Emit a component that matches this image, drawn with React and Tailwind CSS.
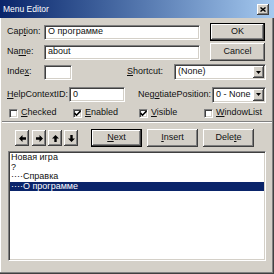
import React from "react";

const SUNKEN = "bg-white border-t border-l border-b border-r border-t-[#808080] border-l-[#808080] border-b-white border-r-white shadow-[inset_1px_1px_0_#404040,inset_-1px_-1px_0_#d4d0c8]";
const RAISED = "bg-[#d4d0c8] shadow-[inset_-1px_-1px_0_#404040,inset_1px_1px_0_#ffffff,inset_-2px_-2px_0_#808080]";

function Btn({ children, w = "w-[55px]", def = false }) {
  if (def) {
    return (
      <div className={`${w} h-[18px] border border-black flex`}>
        <div className={`flex-1 ${RAISED} flex items-center justify-center text-[9px] text-[#111]`}>{children}</div>
      </div>
    );
  }
  return (
    <div className={`${w} h-[18px] ${RAISED} flex items-center justify-center text-[9px] text-[#111]`}>{children}</div>
  );
}

function Combo({ w, text }) {
  return (
    <div className={`${w} h-[16px] ${SUNKEN} flex items-stretch p-[1px]`}>
      <div className="flex-1 flex items-center pl-[2px] text-[9px] text-[#111]">{text}</div>
      <div className={`w-[11px] ${RAISED} flex items-center justify-center`}>
        <svg width="5" height="3" viewBox="0 0 5 3"><polygon points="0,0 5,0 2.5,3" fill="#000" /></svg>
      </div>
    </div>
  );
}

function Check({ on, children, w }) {
  return (
    <div className={`${w} flex items-center gap-[3px]`}>
      <div className={`w-[9px] h-[9px] ${SUNKEN} flex items-center justify-center`}>
        {on && (
          <svg width="7" height="7" viewBox="0 0 7 7">
            <polyline points="0.5,3 2.5,5.2 6.5,1" fill="none" stroke="#000" strokeWidth="1.6" />
          </svg>
        )}
      </div>
      <span className="text-[9px] text-[#111]">{children}</span>
    </div>
  );
}

function Arrow({ dir, cls }) {
  const rot = { left: 0, right: 180, up: 90, down: 270 }[dir];
  return (
    <div className={`w-[14px] h-[16px] ${RAISED} flex items-center justify-center ${cls}`}>
      <svg width="7" height="7" viewBox="0 0 7 7" style={{ transform: `rotate(${rot}deg)` }}>
        <polygon points="0,3.5 3.5,0 3.5,2.3 7,2.3 7,4.7 3.5,4.7 3.5,7" fill="#000" />
      </svg>
    </div>
  );
}

const ITEMS = [
  { t: "Новая игра" },
  { t: "?" },
  { t: "····Справка" },
  { t: "····О программе", sel: true },
];

export default function App() {
  return (
    <div className="w-[274px] h-[274px] bg-[#d4d0c8] font-['Liberation_Sans',Arial,sans-serif] shadow-[inset_-1px_-1px_0_#404040,inset_-2px_-2px_0_#808080,inset_1px_1px_0_#ffffff] overflow-hidden flex flex-col">
      {/* Title bar */}
      <div className="h-[18px] flex items-center justify-between pl-[3px] pr-[5px] bg-gradient-to-r from-[#0a246a] to-[#a6caf0]">
        <span className="text-[8.5px] text-white">Menu Editor</span>
        <div className={`w-[12px] h-[11px] ${RAISED} flex items-center justify-center`}>
          <svg width="6" height="5" viewBox="0 0 6 5">
            <path d="M0.5 0.5L5.5 4.5M5.5 0.5L0.5 4.5" stroke="#000" strokeWidth="1.4" />
          </svg>
        </div>
      </div>

      <div className="px-[7px] flex flex-col">
        {/* Caption */}
        <div className="mt-[5px] h-[18px] flex items-center">
          <span className="w-[37px] text-[9px] text-[#111]">Cap<u>t</u>ion:</span>
          <div className={`w-[156px] h-[15px] ${SUNKEN} flex items-center pl-[3px] text-[9px] text-[#111]`}>О программе</div>
          <div className="ml-[10px]"><Btn def>OK</Btn></div>
        </div>
        {/* Name */}
        <div className="mt-[2px] h-[18px] flex items-center">
          <span className="w-[37px] text-[9px] text-[#111]">Na<u>m</u>e:</span>
          <div className={`w-[156px] h-[15px] ${SUNKEN} flex items-center pl-[3px] text-[9px] text-[#111]`}>about</div>
          <div className="ml-[10px]"><Btn>Cancel</Btn></div>
        </div>
        {/* Index / Shortcut */}
        <div className="mt-[3px] h-[16px] flex items-center">
          <span className="w-[37px] text-[9px] text-[#111]">Inde<u>x</u>:</span>
          <div className={`w-[28px] h-[15px] ${SUNKEN}`} />
          <span className="ml-[55px] w-[47px] text-[9px] text-[#111]"><u>S</u>hortcut:</span>
          <Combo w="w-[92px]" text="(None)" />
        </div>
        {/* HelpContextID / NegotiatePosition */}
        <div className="mt-[6px] h-[17px] flex items-center">
          <span className="w-[62px] text-[9px] text-[#111]"><u>H</u>elpContextID:</span>
          <div className={`w-[56px] h-[15px] ${SUNKEN} flex items-center pl-[3px] text-[9px] text-[#111]`}>0</div>
          <span className="ml-[13px] w-[74px] text-[9px] text-[#111]">Neg<u>o</u>tiatePosition:</span>
          <Combo w="w-[54px]" text="0 - None" />
        </div>
        {/* Checkboxes */}
        <div className="mt-[3px] h-[14px] flex items-center pl-[2px]">
          <Check w="w-[64px]"><u>C</u>hecked</Check>
          <Check w="w-[66px]" on><u>E</u>nabled</Check>
          <Check w="w-[65px]" on><u>V</u>isible</Check>
          <Check w="w-[60px]"><u>W</u>indowList</Check>
        </div>
      </div>

      {/* Separator */}
      <div className="mt-[1px] mx-[2px] h-[2px] border-t border-t-[#808080] border-b border-b-white" />

      <div className="px-[7px] flex flex-col">
        {/* Arrows + buttons */}
        <div className="mt-[6px] h-[18px] flex items-center">
          <Arrow dir="left" cls="ml-[8px]" />
          <Arrow dir="right" cls="ml-[3px]" />
          <Arrow dir="up" cls="ml-[2px]" />
          <Arrow dir="down" cls="ml-[2px]" />
          <div className="ml-[13px]"><Btn def w="w-[51px]"><u>N</u>ext</Btn></div>
          <div className="ml-[5px]"><Btn w="w-[51px]"><u>I</u>nsert</Btn></div>
          <div className="ml-[5px]"><Btn w="w-[51px]">Dele<u>t</u>e</Btn></div>
        </div>
        {/* List */}
        <div className={`mt-[4px] ml-[1px] w-[258px] h-[110px] ${SUNKEN} p-[1px] flex flex-col`}>
          {ITEMS.map((it, i) => (
            <div
              key={i}
              className={`h-[9.5px] flex items-center pl-[1px] text-[9px] leading-none ${it.sel ? "bg-[#0a246a] text-white" : "text-[#111]"}`}
            >
              {it.t}
            </div>
          ))}
        </div>
      </div>
    </div>
  );
}
